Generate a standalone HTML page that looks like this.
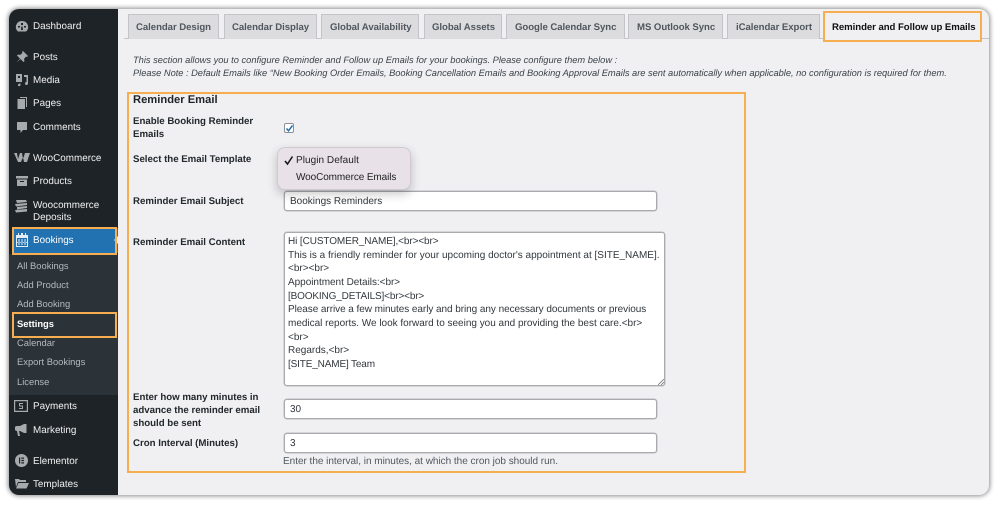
<!DOCTYPE html>
<html><head><meta charset="utf-8">
<style>
html,body{margin:0;padding:0;width:1000px;height:507px;overflow:hidden;background:#fff;font-family:"Liberation Sans",sans-serif;text-rendering:geometricPrecision;}
#w{position:absolute;left:0;top:0;width:1000px;height:507px;background:#fff;overflow:hidden;filter:blur(.35px);}
.t{position:absolute;white-space:nowrap;line-height:13px;}
.win{position:absolute;left:9px;top:9px;width:980px;height:486px;background:#f0f0f2;border-radius:10px;box-shadow:0 0 5px 1px rgba(0,0,0,.45);}
.side{position:absolute;left:9px;top:9px;width:109px;height:486px;background:#1d2327;border-radius:10px 0 0 10px;}
.sub{position:absolute;left:9px;top:254px;width:109px;height:141px;background:#2c3338;}
.blue{position:absolute;left:13px;top:228px;width:105px;height:25px;background:#2271b1;}
.or{position:absolute;border:2px solid #f7ae50;box-sizing:border-box;}
.m{font-size:9.9px;color:#f0f0f1;}
.s{font-size:9.4px;color:#b4b9be;}
.tab{position:absolute;top:14px;height:25px;box-sizing:border-box;background:#dcdcde;border:1px solid #c3c4c7;border-bottom:0;}
.tb{font-size:9.6px;font-weight:bold;color:#50575e;letter-spacing:-.05px;top:21px;}
.l{font-size:9.7px;font-weight:bold;color:#23282d;letter-spacing:-.02px;}
.inp{position:absolute;left:284px;width:373px;height:20px;box-sizing:border-box;background:#fff;border:1px solid #a8aaad;border-radius:3px;box-shadow:0 0 0 .5px #bbbdc0;}
.v{font-size:10px;color:#32373c;}
.n{font-size:9.3px;font-style:italic;color:#3c434a;}
svg.i{position:absolute;fill:#a7aaad;}
</style></head><body><div id="w">
<div class="win"></div>
<div class="side"></div>
<div class="sub"></div>
<div class="blue"></div>

<svg class="i" style="left:15px;top:20px" width="14" height="14" viewBox="0 0 14 14"><path fill-rule="evenodd" d="M7 1a6 6 0 0 1 5 9.500l-1 1H3l-1-1A6 6 0 0 1 7 1zM6 3v2h2V3zM3 6v1.500h2V6zM9 6v1.500h2V6zM6.300 6.500 6 10h2L7.500 6.500z"/></svg>
<svg class="i" style="left:15px;top:50px" width="14" height="14" viewBox="0 0 14 14"><path d="M8 1l5 5-1 1-1-.5-2 2.500.5 2-1 1-3-3-4 3.500 3.500-4-3-3 1-1 2 .5L7.500 3 7 2z"/></svg>
<svg class="i" style="left:15px;top:73px" width="14" height="14" viewBox="0 0 14 14"><path fill-rule="evenodd" d="M1 1h6v8H1zM3 3v2h2V3z"/><path d="M9 2h4v8.500a1.500 1.500 0 1 1-1.500-1.500V4H9zM4 10.500h1.500v1.500a1.300 1.300 0 1 1-1.500-1.300z"/></svg>
<svg class="i" style="left:15px;top:96px" width="14" height="14" viewBox="0 0 14 14"><path d="M5 1h7v10h-1V2H5z"/><path d="M2.500 3H10v10H2.500z"/></svg>
<svg class="i" style="left:15px;top:120px" width="14" height="14" viewBox="0 0 14 14"><path d="M2 2h10v8H8l-2.500 3V10H2z"/></svg>
<svg class="i" style="left:14px;top:152px" width="16" height="11" viewBox="0 0 16 11"><path d="M0 1h3l1 6 2-6h2l1 6 2-6h5l-3 9h-3L9 5l-2 5H4z"/></svg>
<svg class="i" style="left:15px;top:174px" width="14" height="14" viewBox="0 0 14 14"><path fill-rule="evenodd" d="M1 2h12v2.500H1zM2 5.500h10V12H2zM5 7v1h4V7z"/></svg>
<svg class="i" style="left:14px;top:199px" width="15" height="14" viewBox="0 0 15 14"><path d="M2 1h10l1 2-10 1zM1 5l12-1v2L2 7.500zM3 8l10-1v2L3 10.500zM1 11l12-1v2.500L2 13.500z"/></svg>
<svg class="i" style="left:16px;top:233px;fill:#e4eef7" width="12" height="14" viewBox="0 0 12 14"><path fill-rule="evenodd" d="M0 2h2V0h1v2h2V0h2v2h2V0h1v2h2v12H0zM1 5v8h10V5zM2.500 6h1v6h-1zM5.500 6h1v6h-1zM8.500 6h1v6h-1zM1 9h10v.8H1z"/></svg>
<svg class="i" style="left:14px;top:400px" width="14" height="12" viewBox="0 0 14 12"><path fill-rule="evenodd" d="M0 0h14v12H0zM1.200 1.200v9.600h11.600V1.200zM5 3h4v1H6v1.500h3V9H5V8h3V6.500H5z"/></svg>
<svg class="i" style="left:15px;top:423px" width="14" height="14" viewBox="0 0 14 14"><path d="M9 1h2.500v9H9L5 8H4l1 5H3L2 8a2.500 2.500 0 0 1 0-5h3z"/></svg>
<svg class="i" style="left:15px;top:454px" width="13" height="13" viewBox="0 0 13 13"><path fill-rule="evenodd" d="M6.500 0a6.500 6.500 0 1 1 0 13 6.500 6.500 0 0 1 0-13zM4 3.500v6h1.200v-6zM6.300 3.500v1.200H9V3.500zM6.300 5.900v1.200H9V5.900zM6.300 8.300v1.200H9V8.300z"/></svg>
<svg class="i" style="left:15px;top:478px" width="14" height="11" viewBox="0 0 14 11"><path d="M0 1h4l1 1h6v2H3L1 9zM3.500 5H14l-2.500 5.500H1z"/></svg>

<div class="t m" style="left:33px;top:20px">Dashboard</div>
<div class="t m" style="left:33px;top:51px">Posts</div>
<div class="t m" style="left:33px;top:74px">Media</div>
<div class="t m" style="left:33px;top:97px">Pages</div>
<div class="t m" style="left:33px;top:121px">Comments</div>
<div class="t m" style="left:33px;top:152px">WooCommerce</div>
<div class="t m" style="left:33px;top:175px">Products</div>
<div class="t m" style="left:33px;top:199px">Woocommerce</div>
<div class="t m" style="left:33px;top:211px">Deposits</div>
<div class="t m" style="left:33px;top:234px;color:#fff">Bookings</div>
<div style="position:absolute;left:114px;top:235px;width:0;height:0;border:5px solid transparent;border-right-color:#f0f0f2;border-left:0"></div>
<div class="t s" style="left:17px;top:259px">All Bookings</div>
<div class="t s" style="left:17px;top:278px">Add Product</div>
<div class="t s" style="left:17px;top:297px">Add Booking</div>
<div class="t s" style="left:17px;top:317px;color:#fff;font-weight:bold">Settings</div>
<div class="t s" style="left:17px;top:336px">Calendar</div>
<div class="t s" style="left:17px;top:355px">Export Bookings</div>
<div class="t s" style="left:17px;top:375px">License</div>
<div class="t m" style="left:33px;top:400px">Payments</div>
<div class="t m" style="left:33px;top:424px">Marketing</div>
<div class="t m" style="left:33px;top:455px">Elementor</div>
<div class="t m" style="left:33px;top:478px">Templates</div>
<div class="or" style="left:12px;top:227px;width:105px;height:28px"></div>
<div class="or" style="left:12px;top:312px;width:105px;height:26px"></div>

<div style="position:absolute;left:124px;top:38px;width:865px;height:1px;background:#c3c4c7"></div>
<div class="tab" style="left:128px;width:91px"></div>
<div class="tab" style="left:224px;width:93px"></div>
<div class="tab" style="left:321px;width:98px"></div>
<div class="tab" style="left:424px;width:78px"></div>
<div class="tab" style="left:506px;width:119px"></div>
<div class="tab" style="left:628px;width:95px"></div>
<div class="tab" style="left:727px;width:93px"></div>
<div style="position:absolute;left:824px;top:12px;width:157px;height:28px;background:#f0f0f2"></div>
<div class="or" style="left:823px;top:11px;width:159px;height:31px"></div>
<div class="t tb" style="left:136px">Calendar Design</div>
<div class="t tb" style="left:232px">Calendar Display</div>
<div class="t tb" style="left:330px">Global Availability</div>
<div class="t tb" style="left:432px">Global Assets</div>
<div class="t tb" style="left:515px">Google Calendar Sync</div>
<div class="t tb" style="left:637px">MS Outlook Sync</div>
<div class="t tb" style="left:736px">iCalendar Export</div>
<div class="t tb" style="left:832px;color:#111">Reminder and Follow up Emails</div>

<div class="t n" style="left:133px;top:54px">This section allows you to configure Reminder and Follow up Emails for your bookings. Please configure them below :</div>
<div class="t n" style="left:133px;top:67px;letter-spacing:-.02px">Please Note : Default Emails like “New Booking Order Emails, Booking Cancellation Emails and Booking Approval Emails are sent automatically when applicable, no configuration is required for them.</div>

<div class="or" style="left:127px;top:92px;width:619px;height:381px"></div>
<div class="t" style="left:133px;top:94px;font-size:11.2px;font-weight:bold;color:#1d2327">Reminder Email</div>
<div class="t l" style="left:133px;top:115px">Enable Booking Reminder</div>
<div class="t l" style="left:133px;top:128px">Emails</div>
<div style="position:absolute;left:284px;top:123px;width:10px;height:10px;box-sizing:border-box;background:#fff;border:1px solid #8c8f94;border-radius:2px"></div>
<svg style="position:absolute;left:284px;top:123px" width="11" height="11" viewBox="0 0 11 11"><path d="M2.500 5.500l2 2.300L8.500 2.500" fill="none" stroke="#2271b1" stroke-width="1.500"/></svg>
<div class="t l" style="left:133px;top:153px">Select the Email Template</div>

<div class="inp" style="top:191px"></div>
<div class="t v" style="left:290px;top:195px">Bookings Reminders</div>
<div style="position:absolute;left:277px;top:147px;width:134px;height:43px;box-sizing:border-box;background:#e8e1e8;border:1px solid #d0cad0;border-radius:8px;box-shadow:0 4px 10px rgba(0,0,0,.22)"></div>
<svg style="position:absolute;left:284px;top:155px" width="10" height="11" viewBox="0 0 10 11"><path d="M1 6l2.500 3L8.500 1.500" fill="none" stroke="#111" stroke-width="1.500"/></svg>
<div class="t v" style="left:296px;top:154px;color:#222;letter-spacing:.05px">Plugin Default</div>
<div class="t v" style="left:296px;top:171px;color:#222;letter-spacing:-.1px">WooCommerce Emails</div>

<div class="t l" style="left:133px;top:195px">Reminder Email Subject</div>
<div class="t l" style="left:133px;top:236px">Reminder Email Content</div>

<div style="position:absolute;left:284px;top:232px;width:381px;height:154px;box-sizing:border-box;background:#fff;border:1px solid #a8aaad;border-radius:3px;box-shadow:0 0 0 .5px #bbbdc0"></div>
<svg style="position:absolute;left:658px;top:379px" width="6" height="6" viewBox="0 0 6 6"><path d="M0 6L6 0M3 6L6 3" stroke="#777" stroke-width=".8"/></svg>
<div class="t v" style="left:288px;top:235px;letter-spacing:-.1px">Hi [CUSTOMER_NAME],&lt;br&gt;&lt;br&gt;</div>
<div class="t v" style="left:288px;top:249px">This is a friendly reminder for your upcoming doctor's appointment at [SITE_NAME].</div>
<div class="t v" style="left:288px;top:262px">&lt;br&gt;&lt;br&gt;</div>
<div class="t v" style="left:288px;top:276px;letter-spacing:-.03px">Appointment Details:&lt;br&gt;</div>
<div class="t v" style="left:288px;top:290px;letter-spacing:-.15px">[BOOKING_DETAILS]&lt;br&gt;&lt;br&gt;</div>
<div class="t v" style="left:288px;top:303px;letter-spacing:-.06px">Please arrive a few minutes early and bring any necessary documents or previous</div>
<div class="t v" style="left:288px;top:317px;letter-spacing:-.01px">medical reports. We look forward to seeing you and providing the best care.&lt;br&gt;</div>
<div class="t v" style="left:288px;top:331px">&lt;br&gt;</div>
<div class="t v" style="left:288px;top:344px">Regards,&lt;br&gt;</div>
<div class="t v" style="left:288px;top:358px;letter-spacing:-.15px">[SITE_NAME] Team</div>

<div class="t l" style="left:133px;top:391px">Enter how many minutes in</div>
<div class="t l" style="left:133px;top:404px">advance the reminder email</div>
<div class="t l" style="left:133px;top:417px">should be sent</div>
<div class="inp" style="top:399px"></div>
<div class="t v" style="left:290px;top:403px">30</div>
<div class="t l" style="left:133px;top:437px">Cron Interval (Minutes)</div>
<div class="inp" style="top:433px"></div>
<div class="t v" style="left:290px;top:437px">3</div>
<div class="t" style="left:283px;top:455px;font-size:10px;color:#50575e;letter-spacing:-.02px">Enter the interval, in minutes, at which the cron job should run.</div>
</div></body></html>
